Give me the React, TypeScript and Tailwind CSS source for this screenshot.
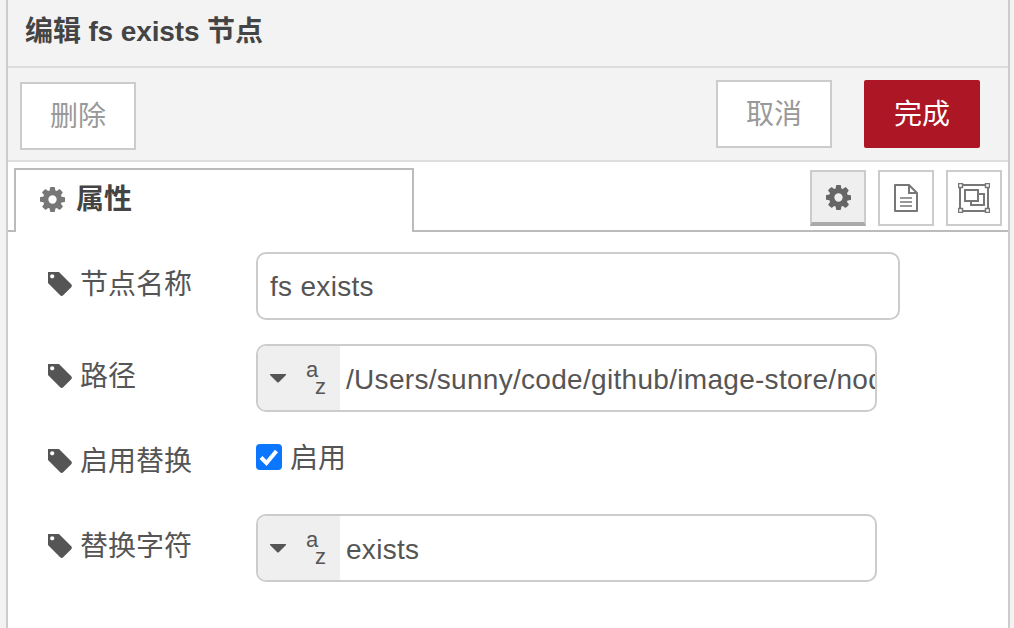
import React from "react";

const COG =
  "M1152 896q0-106-75-181t-181-75-181 75-75 181 75 181 181 75 181-75 75-181zm512-109v222q0 12-8 23t-20 13l-185 28q-19 54-39 91 35 50 107 138 10 12 10 25t-9 23q-27 37-99 108t-94 71q-12 0-26-9l-138-108q-44 23-91 38-16 136-29 186-7 28-36 28h-222q-14 0-24.5-8.5t-11.5-21.5l-28-184q-49-16-90-37l-141 107q-10 9-25 9-14 0-25-11-126-114-165-168-7-10-7-23 0-12 8-23 15-21 51-66.5t54-70.5q-27-50-41-99l-183-27q-13-2-21-12.5t-8-23.5v-222q0-12 8-23t19-13l186-28q14-46 39-92-40-57-107-138-10-12-10-24 0-10 9-23 26-36 98.5-107.5t94.5-71.5q13 0 26 10l138 107q44-23 91-38 16-136 29-186 7-28 36-28h222q14 0 24.5 8.5t11.5 21.5l28 184q49 16 90 37l142-107q9-9 24-9 13 0 25 10 129 119 165 170 7 8 7 22 0 12-8 23-15 21-51 66.5t-54 70.5q26 50 41 98l183 28q13 2 21 12.5t8 23.5z";
const TAG =
  "M384 448q0-53-37.5-90.5t-90.5-37.5-90.5 37.5-37.5 90.5 37.5 90.5 90.5 37.5 90.5-37.5 37.5-90.5zm1067 576q0 53-37 90l-491 492q-39 37-91 37-53 0-90-37l-715-716q-38-37-64.5-101t-26.5-117v-416q0-52 38-90t90-38h416q53 0 117 26.5t102 64.5l715 714q37 39 37 91z";

function Cog({ className }: { className: string }) {
  return (
    <svg viewBox="128 128 1536 1536" className={className} fill="currentColor">
      <path d={COG} />
    </svg>
  );
}

function Tag() {
  return (
    <svg viewBox="0 190 1460 1460" className="h-[24px] w-[24px] text-[#555]" fill="currentColor">
      <path d={TAG} />
    </svg>
  );
}

function Doc() {
  return (
    <svg width="26" height="30" viewBox="0 0 26 30" fill="none" stroke="#777" strokeWidth="2">
      <path d="M2 2h14l8 8v18H2z" strokeLinejoin="round" />
      <path d="M16 2v8h8" />
      <path d="M7 15h12M7 19h12M7 23h12" strokeWidth="1.6" />
    </svg>
  );
}

function Expand() {
  return (
    <svg width="32" height="30" viewBox="0 0 32 30" fill="none" stroke="#777" strokeWidth="2">
      <rect x="2" y="2" width="28" height="26" />
      <rect x="0.5" y="0.5" width="4" height="4" fill="#fff" strokeWidth="1.5" />
      <rect x="27.5" y="0.5" width="4" height="4" fill="#fff" strokeWidth="1.5" />
      <rect x="0.5" y="25.5" width="4" height="4" fill="#fff" strokeWidth="1.5" />
      <rect x="27.5" y="25.5" width="4" height="4" fill="#fff" strokeWidth="1.5" />
      <rect x="7" y="7" width="13" height="11" />
      <path d="M20 11h6v11H13v-4" />
    </svg>
  );
}

function Label({ children }: { children: React.ReactNode }) {
  return (
    <div className="flex w-[208px] shrink-0 items-center gap-[8px] text-[28px] leading-[32px] text-[#555]">
      <Tag />
      <span className="pt-[2px]">{children}</span>
    </div>
  );
}

function TypedInput({ value }: { value: string }) {
  return (
    <div className="flex h-[68px] w-[621px] overflow-hidden rounded-[10px] border-2 border-[#ccc] bg-white">
      <div className="flex w-[82px] shrink-0 items-center bg-[#efefef] pl-[11px] text-[#555]">
        <svg width="18" height="10" viewBox="0 0 18 10" fill="currentColor">
          <path d="M1.5 1h15q1 0 .5 1l-7 7q-1 1-2 0l-7-7q-.5-1 .5-1z" />
        </svg>
        <div className="relative ml-[19px] h-[40px] w-[24px] text-[22px] leading-[16px]">
          <span className="absolute left-0 top-[4px]">a</span>
          <span className="absolute left-[9px] top-[21px]">z</span>
        </div>
      </div>
      <div className="flex-1 overflow-hidden whitespace-nowrap pl-[6px] text-[28px] leading-[68px] tracking-[0.3px] text-[#555]">
        {value}
      </div>
    </div>
  );
}

export default function App() {
  return (
    <div
      className="h-[628px] w-[1014px] overflow-hidden bg-[#f3f3f3] pl-[6px] pr-[4px]"
      style={{ fontFamily: '"Liberation Sans", "Noto Sans CJK SC", sans-serif' }}
    >
      <div className="h-full border-x-2 border-[#ccc] bg-white">
        <div className="flex h-[68px] items-center border-b-2 border-[#ddd] bg-[#f3f3f3] pb-[3px] pl-[17px] text-[28px] font-bold leading-none tracking-[-0.12px] text-[#444]">
          编辑 fs exists 节点
        </div>
        <div className="flex h-[94px] items-start justify-between border-b-2 border-[#ddd] bg-[#f3f3f3] pl-[12px] pr-[28px] pt-[12px]">
          <button className="mt-[2px] h-[68px] w-[116px] border-2 border-[#ccc] bg-white pt-[2px] text-[28px] text-[#999]">
            删除
          </button>
          <div className="flex gap-[32px]">
            <button className="h-[68px] w-[116px] border-2 border-[#ccc] bg-white pt-[2px] text-[28px] text-[#999]">
              取消
            </button>
            <button className="h-[68px] w-[116px] rounded-[2px] bg-[#ad1625] pt-[2px] text-[28px] text-white">
              完成
            </button>
          </div>
        </div>
        <div className="flex h-[70px] items-end justify-between border-b-2 border-[#bbb] pl-[6px] pr-[6px]">
          <div className="-mb-[2px] flex h-[64px] w-[400px] items-center gap-[11px] border-x-2 border-t-2 border-[#bbb] bg-white pb-[4px] pl-[24px] text-[28px] font-bold text-[#444]">
            <Cog className="h-[25px] w-[25px] text-[#777]" />
            <span className="pt-[2px]">属性</span>
          </div>
          <div className="mb-[4px] flex gap-[12px]">
            <div className="flex h-[56px] w-[56px] items-center justify-center border-x-2 border-t-2 border-b-[4px] border-[#ccc] border-b-[#aaa] bg-[#efefef]">
              <Cog className="h-[25px] w-[25px] text-[#666]" />
            </div>
            <div className="flex h-[56px] w-[56px] items-center justify-center border-2 border-[#ccc]">
              <Doc />
            </div>
            <div className="flex h-[56px] w-[56px] items-center justify-center border-2 border-[#ccc]">
              <Expand />
            </div>
          </div>
        </div>
        <div className="pl-[40px] pt-[20px]">
          <div className="flex h-[68px] items-start">
            <div className="pt-[15px]"><Label>节点名称</Label></div>
            <div className="h-[68px] w-[644px] rounded-[10px] border-2 border-[#ccc] pl-[12px] text-[28px] leading-[66px] tracking-[0.3px] text-[#555]">
              fs exists
            </div>
          </div>
          <div className="mt-[24px] flex h-[68px] items-start">
            <div className="pt-[15px]"><Label>路径</Label></div>
            <TypedInput value="/Users/sunny/code/github/image-store/node-red/test" />
          </div>
          <div className="mt-[25px] flex h-[40px] items-center">
            <div className="pt-[8px]"><Label>启用替换</Label></div>
            <div className="relative flex h-[26px] w-[26px] items-center justify-center rounded-[4px] bg-[#0b76ff]">
              <svg width="22" height="22" viewBox="0 0 22 22" fill="none" stroke="#fff" strokeWidth="4">
                <path d="M3 11.5l5.5 5.5 10-12" />
              </svg>
            </div>
            <span className="ml-[8px] pt-[4px] text-[28px] leading-[32px] text-[#555]">启用</span>
          </div>
          <div className="mt-[37px] flex h-[68px] items-start">
            <div className="pt-[15px]"><Label>替换字符</Label></div>
            <TypedInput value="exists" />
          </div>
        </div>
      </div>
    </div>
  );
}
